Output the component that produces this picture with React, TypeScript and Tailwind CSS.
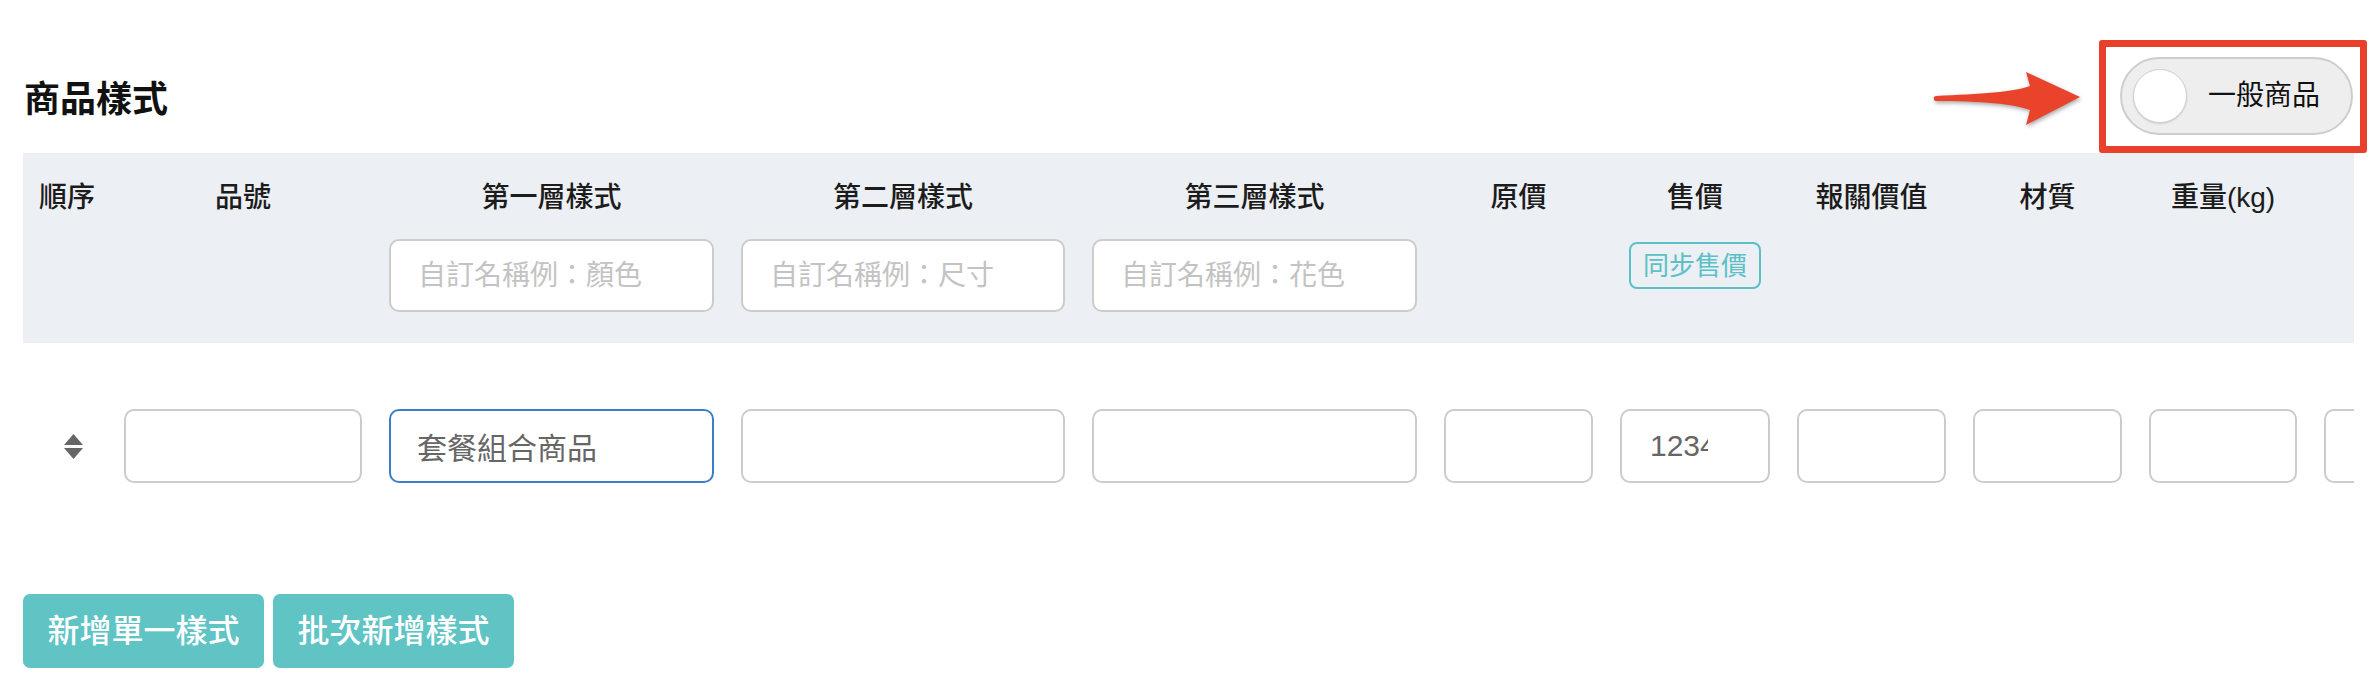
import React from "react";

type Col = {
  w: string;
  label: string;
  ph?: string;
  sync?: boolean;
  first?: boolean;
  value?: string;
  focus?: boolean;
  num?: boolean;
};

const cols: Col[] = [
  { w: "w-[74px]", label: "順序", first: true },
  { w: "w-[238px]", label: "品號" },
  { w: "w-[325px]", label: "第一層樣式", ph: "自訂名稱例：顏色", value: "套餐組合商品", focus: true },
  { w: "w-[324px]", label: "第二層樣式", ph: "自訂名稱例：尺寸" },
  { w: "w-[325px]", label: "第三層樣式", ph: "自訂名稱例：花色" },
  { w: "w-[149px]", label: "原價" },
  { w: "w-[150px]", label: "售價", sync: true, value: "1234", num: true },
  { w: "w-[149px]", label: "報關價值" },
  { w: "w-[149px]", label: "材質" },
  { w: "w-[148px]", label: "重量(kg)" },
  { w: "w-[148px]", label: "" },
];

const font = "font-['Liberation_Sans','Noto_Sans_CJK_TC',sans-serif]";

function SortIcon() {
  return (
    <svg width="19" height="25" viewBox="0 0 19 25" className="block">
      <path d="M9.5 0 L19 11 L0 11 Z" fill="#666666" />
      <path d="M0 14 L19 14 L9.5 25 Z" fill="#666666" />
    </svg>
  );
}

function Arrow() {
  return (
    <svg
      width="156"
      height="62"
      viewBox="0 0 156 62"
      className="absolute left-[-190px] top-[11px] drop-shadow-[1px_2px_2px_rgba(0,0,0,0.35)]"
    >
      <path
        d="M6 28 C50 26 85 24 100 18 L96 4 L150 29 L96 57 L100 42 C85 36 50 33 6 33 C3 33 3 28 6 28 Z"
        fill="#e9432b"
      />
    </svg>
  );
}

export default function App() {
  return (
    <div className={`w-[2380px] h-[700px] overflow-hidden bg-white ${font} pl-[23px] pr-[26px]`}>
      {/* Title row */}
      <div className="flex justify-between items-start h-[153px]">
        <div className="mt-[82px] text-[36px] leading-[36px] font-bold text-[#111111] pl-[1px]">
          商品樣式
        </div>
        <div className="relative mt-[57px] mr-[1px]">
          <Arrow />
          <div className="absolute left-[-21px] top-[-17px] w-[268px] h-[113px] border-[7px] border-[#e8402a] rounded-[3px]" />
          <div className="relative flex items-center w-[233px] h-[78px] rounded-full bg-[#eeeeee] border-2 border-[#cdcdcd] pl-[11px]">
            <div className="w-[54px] h-[54px] rounded-full bg-white border border-[#d2d2d2] shadow-[0_1px_2px_rgba(0,0,0,0.15)]" />
            <span className="ml-[21px] text-[28px] leading-[28px] text-[#111111]">一般商品</span>
          </div>
        </div>
      </div>

      {/* Table */}
      <div className="w-[2331px] overflow-hidden">
        {/* Header band */}
        <div className="flex gap-[27px] h-[190px] bg-[#eceff3] pt-[31px]">
          {cols.map((c, i) => (
            <div
              key={i}
              className={`${c.w} shrink-0 flex flex-col ${c.first ? "items-start pl-[16px]" : "items-center"}`}
            >
              <div className="text-[28px] leading-[28px] font-medium text-[#1c1c1c] whitespace-nowrap">
                {c.label}
              </div>
              {c.ph && (
                <input
                  placeholder={c.ph}
                  className={`mt-[27px] w-full h-[73px] bg-white border-2 border-[#cccccc] rounded-[10px] pl-[27px] text-[28px] outline-none placeholder:text-[#c3c3c3] ${font}`}
                />
              )}
              {c.sync && (
                <button className="mt-[30px] w-[132px] h-[47px] border-2 border-[#5bc0c7] rounded-[8px] text-[26px] leading-[26px] text-[#5bc0c7] bg-transparent">
                  同步售價
                </button>
              )}
            </div>
          ))}
        </div>

        {/* Data row */}
        <div className="flex gap-[27px] items-center mt-[66px] h-[74px]">
          {cols.map((c, i) =>
            c.first ? (
              <div key={i} className={`${c.w} shrink-0 pl-[41px] flex items-center`}>
                <SortIcon />
              </div>
            ) : (
              <input
                key={i}
                defaultValue={c.value ?? ""}
                className={`${c.w} shrink-0 h-[74px] bg-white border-2 rounded-[10px] text-[30px] text-[#666666] outline-none ${font} ${
                  c.focus ? "border-[#3d7fc6]" : "border-[#cccccc]"
                } ${c.num ? "pl-[28px] pr-[60px]" : "pl-[26px] pr-[10px]"}`}
              />
            )
          )}
        </div>
      </div>

      {/* Buttons */}
      <div className="flex gap-[9px] mt-[111px]">
        <button className="w-[241px] h-[74px] rounded-[7px] bg-[#60c4c5] text-white text-[32px] leading-[32px] font-medium">
          新增單一樣式
        </button>
        <button className="w-[241px] h-[74px] rounded-[7px] bg-[#60c4c5] text-white text-[32px] leading-[32px] font-medium">
          批次新增樣式
        </button>
      </div>
    </div>
  );
}
